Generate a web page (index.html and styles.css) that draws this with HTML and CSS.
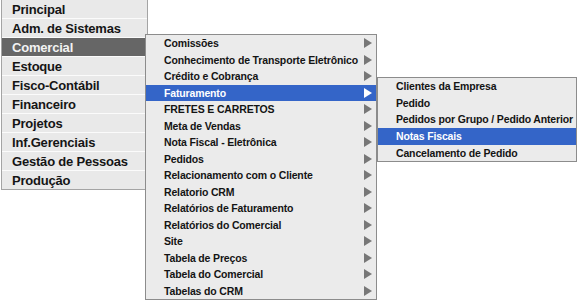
FILE: index.html
```html
<!DOCTYPE html>
<html lang="pt-BR">
<head>
    <meta charset="UTF-8">
    <title>Menu</title>
    <link rel="stylesheet" href="styles.css">
</head>
<body>
<ul class="mainMenu">
    <li><a href="#">Principal</a></li>
    <li><a href="#">Adm. de Sistemas</a></li>
    <li class="open">
        <a href="#">Comercial</a>
        <ul class="subMenu first">
            <li><a href="#">Comissões</a><span class="arrow"></span></li>
            <li><a href="#">Conhecimento de Transporte Eletrônico</a><span class="arrow"></span></li>
            <li><a href="#">Crédito e Cobrança</a><span class="arrow"></span></li>
            <li class="open">
                <a href="#">Faturamento</a><span class="arrow"></span>
                <ul class="subMenu second">
                    <li><a href="#">Clientes da Empresa</a></li>
                    <li><a href="#">Pedido</a></li>
                    <li><a href="#">Pedidos por Grupo / Pedido Anterior</a></li>
                    <li class="active"><a href="#">Notas Fiscais</a></li>
                    <li><a href="#">Cancelamento de Pedido</a></li>
                </ul>
            </li>
            <li><a href="#">FRETES E CARRETOS</a><span class="arrow"></span></li>
            <li><a href="#">Meta de Vendas</a><span class="arrow"></span></li>
            <li><a href="#">Nota Fiscal - Eletrônica</a><span class="arrow"></span></li>
            <li><a href="#">Pedidos</a><span class="arrow"></span></li>
            <li><a href="#">Relacionamento com o Cliente</a><span class="arrow"></span></li>
            <li><a href="#">Relatorio CRM</a><span class="arrow"></span></li>
            <li><a href="#">Relatórios de Faturamento</a><span class="arrow"></span></li>
            <li><a href="#">Relatórios do Comercial</a><span class="arrow"></span></li>
            <li><a href="#">Site</a><span class="arrow"></span></li>
            <li><a href="#">Tabela de Preços</a><span class="arrow"></span></li>
            <li><a href="#">Tabela do Comercial</a><span class="arrow"></span></li>
            <li><a href="#">Tabelas do CRM</a><span class="arrow"></span></li>
        </ul>
    </li>
    <li><a href="#">Estoque</a></li>
    <li><a href="#">Fisco-Contábil</a></li>
    <li><a href="#">Financeiro</a></li>
    <li><a href="#">Projetos</a></li>
    <li><a href="#">Inf.Gerenciais</a></li>
    <li><a href="#">Gestão de Pessoas</a></li>
    <li><a href="#">Produção</a></li>
</ul>
</body>
</html>
```

FILE: styles.css
```css
* {
    margin: 0;
    padding: 0;
    box-sizing: border-box;
    font-family: 'Liberation Sans', Arial, sans-serif;
}

html,
body {
    min-height: 100vh;
    background: #fff;
}

ul {
    list-style: none;
}

a {
    text-decoration: none;
    color: #111;
    white-space: nowrap;
}

.mainMenu {
    width: 147px;
    margin-left: 1px;
    background: #e9e9e9;
    border: 1px solid #a4a4a4;
    border-top: none;
    display: flex;
    flex-direction: column;
}

.mainMenu > li {
    position: relative;
    flex-shrink: 0;
    height: 19px;
    border-bottom: 1px solid #fbfbfb;
    display: flex;
    align-items: center;
    padding-left: 10px;
}

.mainMenu > li:last-child {
    border-bottom: none;
    height: 18px;
}

.mainMenu > li > a {
    font-size: 13px;
    font-weight: bold;
    letter-spacing: -0.2px;
    color: #151515;
}

.mainMenu > li.open {
    background: #666;
}

.mainMenu > li.open > a {
    color: #f2f2f2;
}

.subMenu {
    position: absolute;
    background: #ebebeb;
    border: 1px solid #8c8c8c;
    display: flex;
    flex-direction: column;
    z-index: 10;
}

.subMenu li {
    position: relative;
    flex-shrink: 0;
    height: 16.5px;
    display: flex;
    align-items: center;
    justify-content: space-between;
}

.subMenu li a {
    font-size: 10.5px;
    font-weight: bold;
    letter-spacing: -0.15px;
    color: #141414;
}

.subMenu.first {
    top: -4px;
    left: 143px;
    width: 232px;
}

.subMenu.first > li {
    padding: 0 4px 0 18px;
}

.subMenu.second {
    top: -8px;
    left: 231px;
    width: 200px;
}

.subMenu.second > li {
    padding-left: 18px;
    height: 16.8px;
}

.subMenu li.open,
.subMenu li.active {
    background: #3465c8;
}

.subMenu li.open > a,
.subMenu li.active > a {
    color: #fff;
}

.arrow {
    width: 0;
    height: 0;
    border-top: 5px solid transparent;
    border-bottom: 5px solid transparent;
    border-left: 8px solid #777;
}

.subMenu li.open > .arrow {
    border-left-color: #fff;
}
```
